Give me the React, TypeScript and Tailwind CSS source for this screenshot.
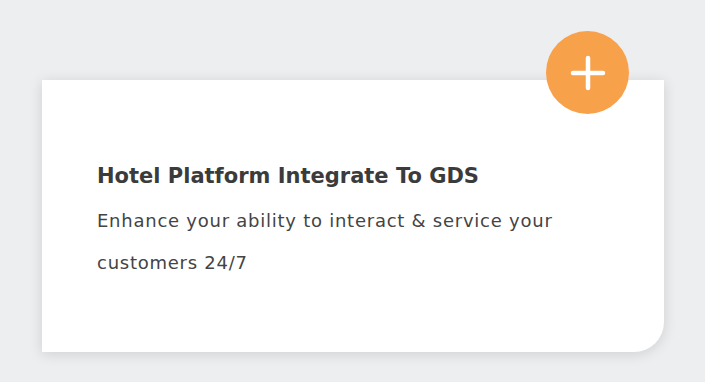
const App = () => {
  return (
    <div className="min-h-screen w-full bg-[#eceef0] pl-[42px] pt-[80px] font-['DejaVu_Sans',sans-serif]">
      <div className="relative h-[272px] w-[622px] rounded-br-[30px] bg-white pl-[55px] pt-[80px] shadow-[0_2px_14px_rgba(0,0,0,0.13)]">
        <button className="absolute -top-[49px] right-[35px] flex h-[83px] w-[83px] items-center justify-center rounded-full bg-[#f8a14b]">
          <svg width="36" height="36" viewBox="0 0 36 36" fill="none">
            <path d="M18 3v30M3 18h30" stroke="white" strokeWidth="4.5" strokeLinecap="round" />
          </svg>
        </button>
        <h3 className="text-[21px] font-bold leading-[32px] text-[#3b3b3b]">
          Hotel Platform Integrate To GDS
        </h3>
        <p className="mt-[8px] w-[500px] text-[18px] leading-[42px] tracking-[0.75px] text-[#444]">
          Enhance your ability to interact &amp; service your customers 24/7
        </p>
      </div>
    </div>
  );
};

export default App;
